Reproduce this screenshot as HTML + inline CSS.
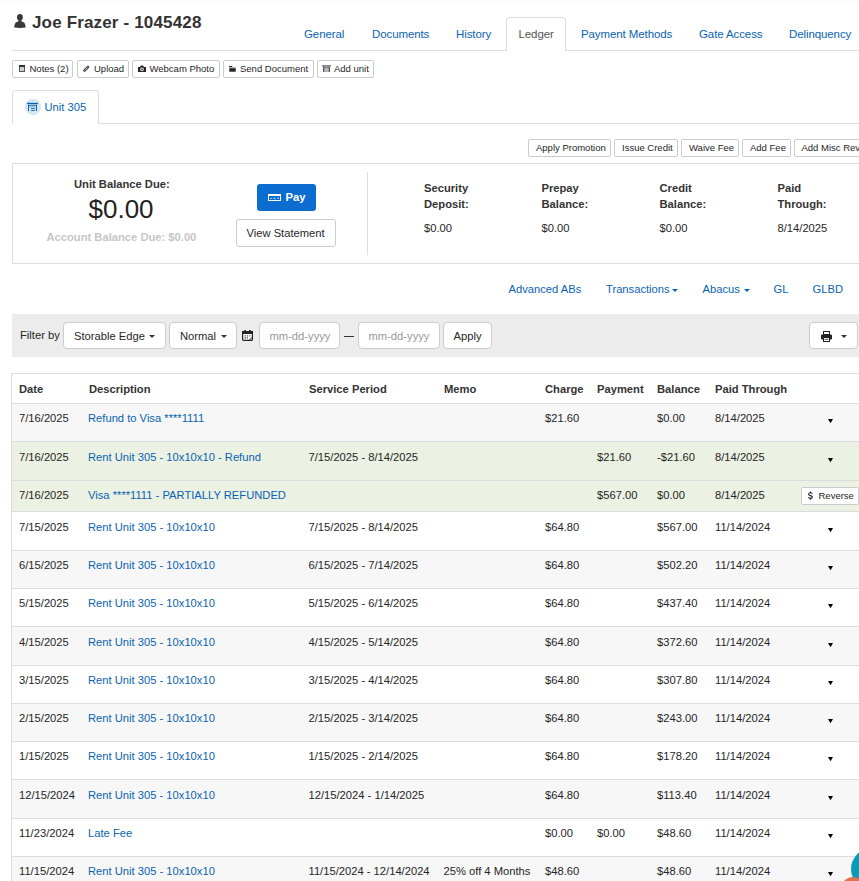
<!DOCTYPE html>
<html><head><meta charset="utf-8">
<style>
*{box-sizing:border-box;margin:0;padding:0}
html,body{width:859px;height:881px;overflow:hidden;background:#fff}
body{font-family:"Liberation Sans",sans-serif;font-size:11px;color:#262626;position:relative}
.a{position:absolute;white-space:nowrap}
svg.a{display:block}
</style></head><body>
<div class="a" style="left:0px;top:0px;width:859px;height:3px;background:#fbfbfb"></div>
<svg class="a" style="left:14px;top:14px" width="12" height="14" viewBox="0 0 12 14"><ellipse cx="5.9" cy="3.3" rx="2.9" ry="3.3" fill="#3a3a3a"/><rect x="4.4" y="5" width="3" height="3.5" fill="#3a3a3a"/><path d="M0.2 13.6 Q0.3 9.2 2.6 7.9 Q4 7.3 5.9 7.3 Q7.8 7.3 9.2 7.9 Q11.5 9.2 11.6 13.6 Q6 14.3 0.2 13.6 Z" fill="#3a3a3a"/></svg>
<div class="a" style="left:32px;top:14px;font-size:17px;line-height:17px;font-weight:bold;color:#333;letter-spacing:0.16px">Joe Frazer - 1045428</div>
<div class="a" style="left:12px;top:50px;width:494px;height:1px;background:#ddd"></div>
<div class="a" style="left:566px;top:50px;width:293px;height:1px;background:#ddd"></div>
<div class="a" style="left:506px;top:17px;width:60px;height:34px;border:1px solid #ddd;border-bottom:none;border-radius:4px 4px 0 0;background:#fff"></div>
<div class="a" style="left:304px;top:29px;font-size:11.5px;line-height:11.5px;color:#0a63b2;letter-spacing:-0.1px">General</div>
<div class="a" style="left:372px;top:29px;font-size:11.5px;line-height:11.5px;color:#0a63b2;letter-spacing:-0.1px">Documents</div>
<div class="a" style="left:456px;top:29px;font-size:11.5px;line-height:11.5px;color:#0a63b2;letter-spacing:-0.1px">History</div>
<div class="a" style="left:581px;top:29px;font-size:11.5px;line-height:11.5px;color:#0a63b2;letter-spacing:-0.1px">Payment Methods</div>
<div class="a" style="left:699px;top:29px;font-size:11.5px;line-height:11.5px;color:#0a63b2;letter-spacing:-0.1px">Gate Access</div>
<div class="a" style="left:789px;top:29px;font-size:11.5px;line-height:11.5px;color:#0a63b2;letter-spacing:-0.1px">Delinquency</div>
<div class="a" style="left:518.5px;top:29px;font-size:11.5px;line-height:11.5px;color:#555;letter-spacing:-0.1px">Ledger</div>
<div class="a" style="left:12px;top:60px;width:61px;height:18px;border:1px solid #ccc;border-radius:2px;background:#fff"></div>
<div class="a" style="left:29.5px;top:64px;font-size:9.5px;line-height:9.5px;color:#262626">Notes (2)</div>
<div class="a" style="left:77px;top:60px;width:52px;height:18px;border:1px solid #ccc;border-radius:2px;background:#fff"></div>
<div class="a" style="left:94px;top:64px;font-size:9.5px;line-height:9.5px;color:#262626">Upload</div>
<div class="a" style="left:132px;top:60px;width:88px;height:18px;border:1px solid #ccc;border-radius:2px;background:#fff"></div>
<div class="a" style="left:149.5px;top:64px;font-size:9.5px;line-height:9.5px;color:#262626">Webcam Photo</div>
<div class="a" style="left:223px;top:60px;width:91px;height:18px;border:1px solid #ccc;border-radius:2px;background:#fff"></div>
<div class="a" style="left:240px;top:64px;font-size:9.5px;line-height:9.5px;color:#262626">Send Document</div>
<div class="a" style="left:317px;top:60px;width:57px;height:18px;border:1px solid #ccc;border-radius:2px;background:#fff"></div>
<div class="a" style="left:334px;top:64px;font-size:9.5px;line-height:9.5px;color:#262626">Add unit</div>
<svg class="a" style="left:19px;top:65px" width="6" height="7" viewBox="0 0 6 7"><rect x="0.5" y="0.5" width="5" height="6" fill="#d0d0d0" stroke="#555" stroke-width="1"/><rect x="0" y="0" width="6" height="2" fill="#333"/></svg>
<svg class="a" style="left:83px;top:65px" width="7" height="7" viewBox="0 0 7 7"><path d="M1.5 5.5 L5 2" stroke="#555" stroke-width="2.6" stroke-linecap="round"/><path d="M2 5 L4.8 2.2" stroke="#fff" stroke-width="0.7" stroke-dasharray="1 0.8"/></svg>
<svg class="a" style="left:138px;top:65px" width="8" height="7" viewBox="0 0 8 7"><path d="M0 2 H2 L3 0.5 H5 L6 2 H8 V7 H0 Z" fill="#222"/><circle cx="4" cy="4.4" r="1.8" fill="#fff"/><circle cx="4" cy="4.4" r="0.9" fill="#222"/></svg>
<svg class="a" style="left:229px;top:65px" width="7" height="7" viewBox="0 0 7 7"><path d="M0 1 H3 L3.5 2 H0 Z" fill="#222"/><rect x="0" y="2" width="7" height="1.2" fill="#bbb"/><rect x="0.3" y="3.2" width="6.4" height="3.5" fill="#222"/></svg>
<svg class="a" style="left:322px;top:65px" width="9" height="7" viewBox="0 0 9 7"><rect x="0" y="0" width="9" height="1.6" fill="#888"/><rect x="1" y="1.6" width="7" height="5.4" fill="#b8b8b8"/><rect x="1" y="1.6" width="1.2" height="5.4" fill="#555"/><rect x="6.8" y="1.6" width="1.2" height="5.4" fill="#555"/><rect x="1" y="1.6" width="7" height="1" fill="#666"/></svg>
<div class="a" style="left:12px;top:90px;width:87px;height:34px;border:1px solid #ddd;border-bottom:none;border-radius:4px 4px 0 0;background:#fff"></div>
<div class="a" style="left:98px;top:123px;width:761px;height:1px;background:#ddd"></div>
<svg class="a" style="left:24px;top:98px" width="18" height="18" viewBox="0 0 18 18"><circle cx="9" cy="9" r="8.2" fill="#d8e8f3"/><rect x="3" y="4.8" width="11" height="1.3" fill="#0a63b2"/><rect x="4" y="6.8" width="1" height="6.2" fill="#0a63b2"/><rect x="12" y="6.8" width="1" height="6.2" fill="#0a63b2"/><rect x="4" y="6.8" width="9" height="0.9" fill="#0a63b2"/><rect x="5.5" y="8" width="6" height="1.3" fill="#0a63b2" opacity="0.3"/><rect x="7" y="10" width="4" height="0.9" fill="#0a63b2"/><rect x="7" y="12" width="4" height="0.9" fill="#0a63b2"/></svg>
<div class="a" style="left:44.5px;top:102px;font-size:11.2px;line-height:11.2px;color:#0a63b2">Unit 305</div>
<div class="a" style="left:528px;top:139px;width:83px;height:18px;border:1px solid #ccc;border-radius:2px;background:#fff"></div>
<div class="a" style="left:536px;top:143px;font-size:9.5px;line-height:9.5px;color:#262626">Apply Promotion</div>
<div class="a" style="left:614px;top:139px;width:64px;height:18px;border:1px solid #ccc;border-radius:2px;background:#fff"></div>
<div class="a" style="left:622px;top:143px;font-size:9.5px;line-height:9.5px;color:#262626">Issue Credit</div>
<div class="a" style="left:681px;top:139px;width:58px;height:18px;border:1px solid #ccc;border-radius:2px;background:#fff"></div>
<div class="a" style="left:689px;top:143px;font-size:9.5px;line-height:9.5px;color:#262626">Waive Fee</div>
<div class="a" style="left:742px;top:139px;width:49px;height:18px;border:1px solid #ccc;border-radius:2px;background:#fff"></div>
<div class="a" style="left:750px;top:143px;font-size:9.5px;line-height:9.5px;color:#262626">Add Fee</div>
<div class="a" style="left:794px;top:139px;width:90px;height:18px;border:1px solid #ccc;border-radius:2px;background:#fff"></div>
<div class="a" style="left:801.5px;top:143px;font-size:9.5px;line-height:9.5px;color:#262626">Add Misc Revenue</div>
<div class="a" style="left:12px;top:163px;width:880px;height:101px;border:1px solid #ddd"></div>
<div class="a" style="left:74px;top:179px;font-size:11.2px;line-height:11.2px;font-weight:bold;color:#333">Unit Balance Due:</div>
<div class="a" style="left:88.5px;top:196px;font-size:26px;line-height:26px;color:#222">$0.00</div>
<div class="a" style="left:46.5px;top:232px;font-size:11.2px;line-height:11.2px;font-weight:bold;color:#c6c6c6">Account Balance Due: $0.00</div>
<div class="a" style="left:257px;top:184px;width:59px;height:27px;background:#0b6dd0;border-radius:3px"></div>
<svg class="a" style="left:268px;top:194px" width="13" height="7" viewBox="0 0 13 7"><rect x="0.5" y="0.5" width="12" height="6" fill="none" stroke="#fff" stroke-width="1"/><rect x="0" y="0" width="13" height="2" fill="#fff"/><rect x="2" y="4" width="2" height="0.8" fill="#fff" opacity="0.7"/><rect x="5" y="4" width="3" height="0.8" fill="#fff" opacity="0.7"/><rect x="9.5" y="3.5" width="1.5" height="1.2" fill="#fff" opacity="0.8"/></svg>
<div class="a" style="left:285.5px;top:192px;font-size:11.2px;line-height:11.2px;font-weight:bold;color:#fff">Pay</div>
<div class="a" style="left:236px;top:219px;width:100px;height:28px;border:1px solid #ccc;border-radius:3px;background:#fff"></div>
<div class="a" style="left:246.5px;top:228px;font-size:11.2px;line-height:11.2px;color:#262626">View Statement</div>
<div class="a" style="left:367px;top:172px;width:1px;height:83px;background:#ddd"></div>
<div class="a" style="left:424px;top:183px;font-size:11.2px;line-height:11.2px;font-weight:bold;color:#333">Security</div>
<div class="a" style="left:424px;top:199px;font-size:11.2px;line-height:11.2px;font-weight:bold;color:#333">Deposit:</div>
<div class="a" style="left:424px;top:223px;font-size:11.2px;line-height:11.2px">$0.00</div>
<div class="a" style="left:541.5px;top:183px;font-size:11.2px;line-height:11.2px;font-weight:bold;color:#333">Prepay</div>
<div class="a" style="left:541.5px;top:199px;font-size:11.2px;line-height:11.2px;font-weight:bold;color:#333">Balance:</div>
<div class="a" style="left:541.5px;top:223px;font-size:11.2px;line-height:11.2px">$0.00</div>
<div class="a" style="left:659.5px;top:183px;font-size:11.2px;line-height:11.2px;font-weight:bold;color:#333">Credit</div>
<div class="a" style="left:659.5px;top:199px;font-size:11.2px;line-height:11.2px;font-weight:bold;color:#333">Balance:</div>
<div class="a" style="left:659.5px;top:223px;font-size:11.2px;line-height:11.2px">$0.00</div>
<div class="a" style="left:777.5px;top:183px;font-size:11.2px;line-height:11.2px;font-weight:bold;color:#333">Paid</div>
<div class="a" style="left:777.5px;top:199px;font-size:11.2px;line-height:11.2px;font-weight:bold;color:#333">Through:</div>
<div class="a" style="left:777.5px;top:223px;font-size:11.2px;line-height:11.2px">8/14/2025</div>
<div class="a" style="left:508.5px;top:284px;font-size:11.2px;line-height:11.2px;color:#0a63b2">Advanced ABs</div>
<div class="a" style="left:606px;top:284px;font-size:11.2px;line-height:11.2px;color:#0a63b2">Transactions</div>
<div class="a" style="left:672px;top:289px;width:0;height:0;border-left:3.0px solid transparent;border-right:3.0px solid transparent;border-top:3px solid #0a63b2"></div>
<div class="a" style="left:702.5px;top:284px;font-size:11.2px;line-height:11.2px;color:#0a63b2">Abacus</div>
<div class="a" style="left:743.5px;top:289px;width:0;height:0;border-left:3.0px solid transparent;border-right:3.0px solid transparent;border-top:3px solid #0a63b2"></div>
<div class="a" style="left:773.5px;top:284px;font-size:11.2px;line-height:11.2px;color:#0a63b2">GL</div>
<div class="a" style="left:812.5px;top:284px;font-size:11.2px;line-height:11.2px;color:#0a63b2">GLBD</div>
<div class="a" style="left:12px;top:314px;width:860px;height:43px;background:#ececec"></div>
<div class="a" style="left:20px;top:330px;font-size:11.2px;line-height:11.2px">Filter by</div>
<div class="a" style="left:63px;top:322px;width:103px;height:27px;border:1px solid #ccc;border-radius:4px;background:#fff"></div>
<div class="a" style="left:169px;top:322px;width:68px;height:27px;border:1px solid #ccc;border-radius:4px;background:#fff"></div>
<div class="a" style="left:259px;top:322px;width:81px;height:27px;border:1px solid #ccc;border-radius:4px;background:#fff"></div>
<div class="a" style="left:358px;top:322px;width:82px;height:27px;border:1px solid #ccc;border-radius:4px;background:#fff"></div>
<div class="a" style="left:443px;top:322px;width:49px;height:27px;border:1px solid #ccc;border-radius:4px;background:#fff"></div>
<div class="a" style="left:809px;top:322px;width:49px;height:27px;border:1px solid #ccc;border-radius:4px;background:#fff"></div>
<div class="a" style="left:74px;top:331px;font-size:11.2px;line-height:11.2px">Storable Edge</div>
<div class="a" style="left:149px;top:335px;width:0;height:0;border-left:3.0px solid transparent;border-right:3.0px solid transparent;border-top:3px solid #333"></div>
<div class="a" style="left:180px;top:331px;font-size:11.2px;line-height:11.2px">Normal</div>
<div class="a" style="left:221px;top:335px;width:0;height:0;border-left:3.0px solid transparent;border-right:3.0px solid transparent;border-top:3px solid #333"></div>
<svg class="a" style="left:242px;top:330px" width="11" height="11" viewBox="0 0 11 11"><rect x="0.6" y="1.6" width="9.8" height="8.8" rx="1" fill="#fff" stroke="#222" stroke-width="1.2"/><rect x="0" y="1" width="11" height="3" fill="#222"/><rect x="2.3" y="0" width="1.6" height="2" fill="#222"/><rect x="7.1" y="0" width="1.6" height="2" fill="#222"/><rect x="2.5" y="5.4" width="1.5" height="1" fill="#555"/><rect x="4.8" y="5.4" width="1.2" height="1" fill="#222"/><rect x="6.8" y="5.4" width="1.5" height="1" fill="#555"/><rect x="2.5" y="7.2" width="1.5" height="1.5" fill="#666"/><rect x="4.8" y="7.2" width="1.2" height="1.5" fill="#666"/><path d="M7 10.5 L10.5 7" stroke="#222" stroke-width="1"/></svg>
<div class="a" style="left:269.5px;top:331px;font-size:11.2px;line-height:11.2px;color:#999">mm-dd-yyyy</div>
<div class="a" style="left:344px;top:336px;width:10px;height:1px;background:#333"></div>
<div class="a" style="left:368.5px;top:331px;font-size:11.2px;line-height:11.2px;color:#999">mm-dd-yyyy</div>
<div class="a" style="left:453.5px;top:331px;font-size:11.2px;line-height:11.2px">Apply</div>
<svg class="a" style="left:821px;top:331px" width="11" height="11" viewBox="0 0 11 11"><rect x="2.5" y="0.5" width="6" height="3" fill="#fff" stroke="#222" stroke-width="1"/><rect x="0" y="3.5" width="11" height="5" rx="1" fill="#222"/><rect x="2.5" y="6.5" width="6" height="4" fill="#fff" stroke="#222" stroke-width="1"/><rect x="3.5" y="7.8" width="4" height="0.8" fill="#222"/></svg>
<div class="a" style="left:841px;top:335px;width:0;height:0;border-left:3.0px solid transparent;border-right:3.0px solid transparent;border-top:3px solid #333"></div>
<div class="a" style="left:11px;top:373px;width:900px;height:1px;background:#ddd"></div>
<div class="a" style="left:11px;top:373px;width:1px;height:520px;background:#ddd"></div>
<div class="a" style="left:19px;top:384px;font-size:11.2px;line-height:11.2px;font-weight:bold;color:#333">Date</div>
<div class="a" style="left:89px;top:384px;font-size:11.2px;line-height:11.2px;font-weight:bold;color:#333">Description</div>
<div class="a" style="left:309px;top:384px;font-size:11.2px;line-height:11.2px;font-weight:bold;color:#333">Service Period</div>
<div class="a" style="left:444px;top:384px;font-size:11.2px;line-height:11.2px;font-weight:bold;color:#333">Memo</div>
<div class="a" style="left:545px;top:384px;font-size:11.2px;line-height:11.2px;font-weight:bold;color:#333">Charge</div>
<div class="a" style="left:597px;top:384px;font-size:11.2px;line-height:11.2px;font-weight:bold;color:#333">Payment</div>
<div class="a" style="left:657px;top:384px;font-size:11.2px;line-height:11.2px;font-weight:bold;color:#333">Balance</div>
<div class="a" style="left:715px;top:384px;font-size:11.2px;line-height:11.2px;font-weight:bold;color:#333">Paid Through</div>
<div class="a" style="left:12px;top:403px;width:900px;height:1px;background:#ddd"></div>
<div class="a" style="left:12px;top:404px;width:900px;height:37px;background:#f7f7f7"></div>
<div class="a" style="left:19px;top:413px;font-size:11.2px;line-height:11.2px">7/16/2025</div>
<div class="a" style="left:88px;top:413px;font-size:11.2px;line-height:11.2px;color:#0a63b2">Refund to Visa ****1111</div>
<div class="a" style="left:545px;top:413px;font-size:11.2px;line-height:11.2px">$21.60</div>
<div class="a" style="left:657px;top:413px;font-size:11.2px;line-height:11.2px">$0.00</div>
<div class="a" style="left:715px;top:413px;font-size:11.2px;line-height:11.2px">8/14/2025</div>
<svg class="a" style="left:828px;top:419px" width="5" height="5" viewBox="0 0 5 5"><path d="M0 0 H5 L2.5 4.3 Z" fill="#000"/></svg>
<div class="a" style="left:12px;top:442px;width:900px;height:38px;background:#ebf1e3"></div>
<div class="a" style="left:12px;top:441px;width:900px;height:1px;background:#ddd"></div>
<div class="a" style="left:19px;top:452px;font-size:11.2px;line-height:11.2px">7/16/2025</div>
<div class="a" style="left:88px;top:452px;font-size:11.2px;line-height:11.2px;color:#0a63b2">Rent Unit 305 - 10x10x10 - Refund</div>
<div class="a" style="left:308.5px;top:452px;font-size:11.2px;line-height:11.2px">7/15/2025 - 8/14/2025</div>
<div class="a" style="left:597px;top:452px;font-size:11.2px;line-height:11.2px">$21.60</div>
<div class="a" style="left:657px;top:452px;font-size:11.2px;line-height:11.2px">-$21.60</div>
<div class="a" style="left:715px;top:452px;font-size:11.2px;line-height:11.2px">8/14/2025</div>
<svg class="a" style="left:828px;top:458px" width="5" height="5" viewBox="0 0 5 5"><path d="M0 0 H5 L2.5 4.3 Z" fill="#000"/></svg>
<div class="a" style="left:12px;top:481px;width:900px;height:30px;background:#ebf1e3"></div>
<div class="a" style="left:12px;top:480px;width:900px;height:1px;background:#ddd"></div>
<div class="a" style="left:19px;top:490px;font-size:11.2px;line-height:11.2px">7/16/2025</div>
<div class="a" style="left:88px;top:490px;font-size:11.2px;line-height:11.2px;color:#0a63b2">Visa ****1111 - PARTIALLY REFUNDED</div>
<div class="a" style="left:597px;top:490px;font-size:11.2px;line-height:11.2px">$567.00</div>
<div class="a" style="left:657px;top:490px;font-size:11.2px;line-height:11.2px">$0.00</div>
<div class="a" style="left:715px;top:490px;font-size:11.2px;line-height:11.2px">8/14/2025</div>
<div class="a" style="left:801px;top:487px;width:58px;height:18px;border:1px solid #ccc;border-radius:2px;background:#fff"></div>
<svg class="a" style="left:807px;top:491px" width="7" height="9" viewBox="0 0 7 9"><path d="M5.3 2.9 C5.1 2.1 4.3 1.8 3.5 1.8 C2.4 1.8 1.6 2.4 1.6 3.2 C1.6 4.1 2.5 4.4 3.5 4.6 C4.6 4.9 5.4 5.2 5.4 6.1 C5.4 6.9 4.5 7.4 3.5 7.4 C2.5 7.4 1.7 7 1.5 6.2 M3.5 0.4 V1.8 M3.5 7.4 V8.8" stroke="#222" stroke-width="1.1" fill="none"/></svg>
<div class="a" style="left:818.5px;top:491px;font-size:9.5px;line-height:9.5px;color:#262626">Reverse</div>
<div class="a" style="left:12px;top:512px;width:900px;height:38px;background:#fff"></div>
<div class="a" style="left:12px;top:511px;width:900px;height:1px;background:#ddd"></div>
<div class="a" style="left:19px;top:522px;font-size:11.2px;line-height:11.2px">7/15/2025</div>
<div class="a" style="left:88px;top:522px;font-size:11.2px;line-height:11.2px;color:#0a63b2">Rent Unit 305 - 10x10x10</div>
<div class="a" style="left:308.5px;top:522px;font-size:11.2px;line-height:11.2px">7/15/2025 - 8/14/2025</div>
<div class="a" style="left:545px;top:522px;font-size:11.2px;line-height:11.2px">$64.80</div>
<div class="a" style="left:657px;top:522px;font-size:11.2px;line-height:11.2px">$567.00</div>
<div class="a" style="left:715px;top:522px;font-size:11.2px;line-height:11.2px">11/14/2024</div>
<svg class="a" style="left:828px;top:528px" width="5" height="5" viewBox="0 0 5 5"><path d="M0 0 H5 L2.5 4.3 Z" fill="#000"/></svg>
<div class="a" style="left:12px;top:551px;width:900px;height:37px;background:#f7f7f7"></div>
<div class="a" style="left:12px;top:550px;width:900px;height:1px;background:#ddd"></div>
<div class="a" style="left:19px;top:560px;font-size:11.2px;line-height:11.2px">6/15/2025</div>
<div class="a" style="left:88px;top:560px;font-size:11.2px;line-height:11.2px;color:#0a63b2">Rent Unit 305 - 10x10x10</div>
<div class="a" style="left:308.5px;top:560px;font-size:11.2px;line-height:11.2px">6/15/2025 - 7/14/2025</div>
<div class="a" style="left:545px;top:560px;font-size:11.2px;line-height:11.2px">$64.80</div>
<div class="a" style="left:657px;top:560px;font-size:11.2px;line-height:11.2px">$502.20</div>
<div class="a" style="left:715px;top:560px;font-size:11.2px;line-height:11.2px">11/14/2024</div>
<svg class="a" style="left:828px;top:566px" width="5" height="5" viewBox="0 0 5 5"><path d="M0 0 H5 L2.5 4.3 Z" fill="#000"/></svg>
<div class="a" style="left:12px;top:589px;width:900px;height:37px;background:#fff"></div>
<div class="a" style="left:12px;top:588px;width:900px;height:1px;background:#ddd"></div>
<div class="a" style="left:19px;top:598px;font-size:11.2px;line-height:11.2px">5/15/2025</div>
<div class="a" style="left:88px;top:598px;font-size:11.2px;line-height:11.2px;color:#0a63b2">Rent Unit 305 - 10x10x10</div>
<div class="a" style="left:308.5px;top:598px;font-size:11.2px;line-height:11.2px">5/15/2025 - 6/14/2025</div>
<div class="a" style="left:545px;top:598px;font-size:11.2px;line-height:11.2px">$64.80</div>
<div class="a" style="left:657px;top:598px;font-size:11.2px;line-height:11.2px">$437.40</div>
<div class="a" style="left:715px;top:598px;font-size:11.2px;line-height:11.2px">11/14/2024</div>
<svg class="a" style="left:828px;top:604px" width="5" height="5" viewBox="0 0 5 5"><path d="M0 0 H5 L2.5 4.3 Z" fill="#000"/></svg>
<div class="a" style="left:12px;top:627px;width:900px;height:38px;background:#f7f7f7"></div>
<div class="a" style="left:12px;top:626px;width:900px;height:1px;background:#ddd"></div>
<div class="a" style="left:19px;top:637px;font-size:11.2px;line-height:11.2px">4/15/2025</div>
<div class="a" style="left:88px;top:637px;font-size:11.2px;line-height:11.2px;color:#0a63b2">Rent Unit 305 - 10x10x10</div>
<div class="a" style="left:308.5px;top:637px;font-size:11.2px;line-height:11.2px">4/15/2025 - 5/14/2025</div>
<div class="a" style="left:545px;top:637px;font-size:11.2px;line-height:11.2px">$64.80</div>
<div class="a" style="left:657px;top:637px;font-size:11.2px;line-height:11.2px">$372.60</div>
<div class="a" style="left:715px;top:637px;font-size:11.2px;line-height:11.2px">11/14/2024</div>
<svg class="a" style="left:828px;top:643px" width="5" height="5" viewBox="0 0 5 5"><path d="M0 0 H5 L2.5 4.3 Z" fill="#000"/></svg>
<div class="a" style="left:12px;top:666px;width:900px;height:37px;background:#fff"></div>
<div class="a" style="left:12px;top:665px;width:900px;height:1px;background:#ddd"></div>
<div class="a" style="left:19px;top:675px;font-size:11.2px;line-height:11.2px">3/15/2025</div>
<div class="a" style="left:88px;top:675px;font-size:11.2px;line-height:11.2px;color:#0a63b2">Rent Unit 305 - 10x10x10</div>
<div class="a" style="left:308.5px;top:675px;font-size:11.2px;line-height:11.2px">3/15/2025 - 4/14/2025</div>
<div class="a" style="left:545px;top:675px;font-size:11.2px;line-height:11.2px">$64.80</div>
<div class="a" style="left:657px;top:675px;font-size:11.2px;line-height:11.2px">$307.80</div>
<div class="a" style="left:715px;top:675px;font-size:11.2px;line-height:11.2px">11/14/2024</div>
<svg class="a" style="left:828px;top:681px" width="5" height="5" viewBox="0 0 5 5"><path d="M0 0 H5 L2.5 4.3 Z" fill="#000"/></svg>
<div class="a" style="left:12px;top:704px;width:900px;height:37px;background:#f7f7f7"></div>
<div class="a" style="left:12px;top:703px;width:900px;height:1px;background:#ddd"></div>
<div class="a" style="left:19px;top:713px;font-size:11.2px;line-height:11.2px">2/15/2025</div>
<div class="a" style="left:88px;top:713px;font-size:11.2px;line-height:11.2px;color:#0a63b2">Rent Unit 305 - 10x10x10</div>
<div class="a" style="left:308.5px;top:713px;font-size:11.2px;line-height:11.2px">2/15/2025 - 3/14/2025</div>
<div class="a" style="left:545px;top:713px;font-size:11.2px;line-height:11.2px">$64.80</div>
<div class="a" style="left:657px;top:713px;font-size:11.2px;line-height:11.2px">$243.00</div>
<div class="a" style="left:715px;top:713px;font-size:11.2px;line-height:11.2px">11/14/2024</div>
<svg class="a" style="left:828px;top:719px" width="5" height="5" viewBox="0 0 5 5"><path d="M0 0 H5 L2.5 4.3 Z" fill="#000"/></svg>
<div class="a" style="left:12px;top:742px;width:900px;height:37px;background:#fff"></div>
<div class="a" style="left:12px;top:741px;width:900px;height:1px;background:#ddd"></div>
<div class="a" style="left:19px;top:751px;font-size:11.2px;line-height:11.2px">1/15/2025</div>
<div class="a" style="left:88px;top:751px;font-size:11.2px;line-height:11.2px;color:#0a63b2">Rent Unit 305 - 10x10x10</div>
<div class="a" style="left:308.5px;top:751px;font-size:11.2px;line-height:11.2px">1/15/2025 - 2/14/2025</div>
<div class="a" style="left:545px;top:751px;font-size:11.2px;line-height:11.2px">$64.80</div>
<div class="a" style="left:657px;top:751px;font-size:11.2px;line-height:11.2px">$178.20</div>
<div class="a" style="left:715px;top:751px;font-size:11.2px;line-height:11.2px">11/14/2024</div>
<svg class="a" style="left:828px;top:757px" width="5" height="5" viewBox="0 0 5 5"><path d="M0 0 H5 L2.5 4.3 Z" fill="#000"/></svg>
<div class="a" style="left:12px;top:780px;width:900px;height:38px;background:#f7f7f7"></div>
<div class="a" style="left:12px;top:779px;width:900px;height:1px;background:#ddd"></div>
<div class="a" style="left:19px;top:790px;font-size:11.2px;line-height:11.2px">12/15/2024</div>
<div class="a" style="left:88px;top:790px;font-size:11.2px;line-height:11.2px;color:#0a63b2">Rent Unit 305 - 10x10x10</div>
<div class="a" style="left:308.5px;top:790px;font-size:11.2px;line-height:11.2px">12/15/2024 - 1/14/2025</div>
<div class="a" style="left:545px;top:790px;font-size:11.2px;line-height:11.2px">$64.80</div>
<div class="a" style="left:657px;top:790px;font-size:11.2px;line-height:11.2px">$113.40</div>
<div class="a" style="left:715px;top:790px;font-size:11.2px;line-height:11.2px">11/14/2024</div>
<svg class="a" style="left:828px;top:796px" width="5" height="5" viewBox="0 0 5 5"><path d="M0 0 H5 L2.5 4.3 Z" fill="#000"/></svg>
<div class="a" style="left:12px;top:819px;width:900px;height:37px;background:#fff"></div>
<div class="a" style="left:12px;top:818px;width:900px;height:1px;background:#ddd"></div>
<div class="a" style="left:19px;top:828px;font-size:11.2px;line-height:11.2px">11/23/2024</div>
<div class="a" style="left:88px;top:828px;font-size:11.2px;line-height:11.2px;color:#0a63b2">Late Fee</div>
<div class="a" style="left:545px;top:828px;font-size:11.2px;line-height:11.2px">$0.00</div>
<div class="a" style="left:597px;top:828px;font-size:11.2px;line-height:11.2px">$0.00</div>
<div class="a" style="left:657px;top:828px;font-size:11.2px;line-height:11.2px">$48.60</div>
<div class="a" style="left:715px;top:828px;font-size:11.2px;line-height:11.2px">11/14/2024</div>
<svg class="a" style="left:828px;top:834px" width="5" height="5" viewBox="0 0 5 5"><path d="M0 0 H5 L2.5 4.3 Z" fill="#000"/></svg>
<div class="a" style="left:12px;top:857px;width:900px;height:43px;background:#f7f7f7"></div>
<div class="a" style="left:12px;top:856px;width:900px;height:1px;background:#ddd"></div>
<div class="a" style="left:19px;top:866px;font-size:11.2px;line-height:11.2px">11/15/2024</div>
<div class="a" style="left:88px;top:866px;font-size:11.2px;line-height:11.2px;color:#0a63b2">Rent Unit 305 - 10x10x10</div>
<div class="a" style="left:308.5px;top:866px;font-size:11.2px;line-height:11.2px">11/15/2024 - 12/14/2024</div>
<div class="a" style="left:443.5px;top:866px;font-size:11.2px;line-height:11.2px">25% off 4 Months</div>
<div class="a" style="left:545px;top:866px;font-size:11.2px;line-height:11.2px">$48.60</div>
<div class="a" style="left:657px;top:866px;font-size:11.2px;line-height:11.2px">$48.60</div>
<div class="a" style="left:715px;top:866px;font-size:11.2px;line-height:11.2px">11/14/2024</div>
<svg class="a" style="left:828px;top:872px" width="5" height="5" viewBox="0 0 5 5"><path d="M0 0 H5 L2.5 4.3 Z" fill="#000"/></svg>
<div class="a" style="left:851px;top:848px;width:42px;height:42px;border-radius:50%;background:#0a9bb6"></div>
<div class="a" style="left:840.6px;top:877px;width:24.8px;height:24.8px;border-radius:50%;background:#e2734c"></div>
</body></html>
